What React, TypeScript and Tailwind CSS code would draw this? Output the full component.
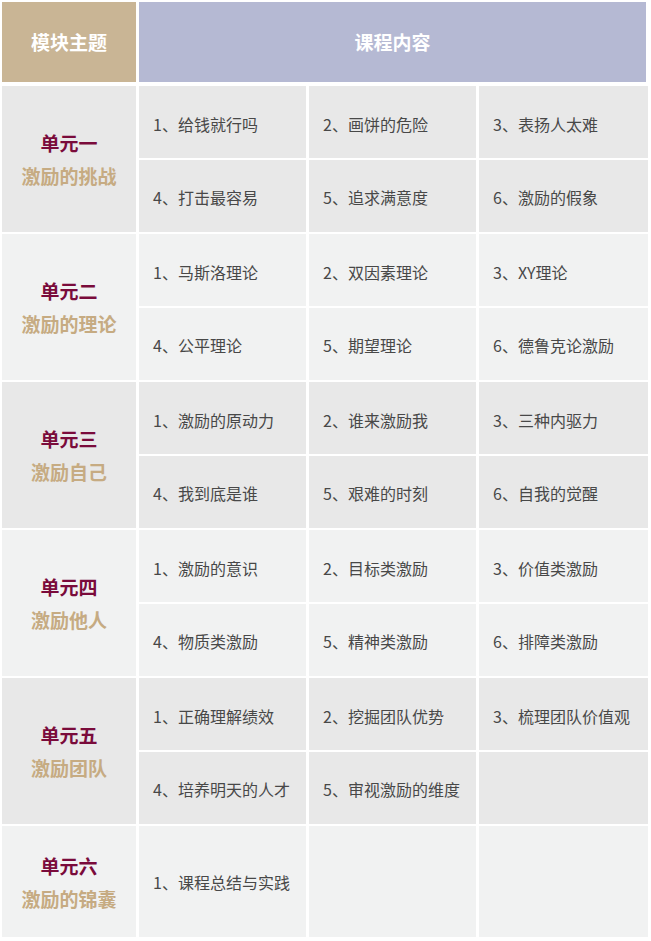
const units = [
  {
    title: "单元一",
    subtitle: "激励的挑战",
    items: ["1、给钱就行吗", "2、画饼的危险", "3、表扬人太难", "4、打击最容易", "5、追求满意度", "6、激励的假象"],
  },
  {
    title: "单元二",
    subtitle: "激励的理论",
    items: ["1、马斯洛理论", "2、双因素理论", "3、XY理论", "4、公平理论", "5、期望理论", "6、德鲁克论激励"],
  },
  {
    title: "单元三",
    subtitle: "激励自己",
    items: ["1、激励的原动力", "2、谁来激励我", "3、三种内驱力", "4、我到底是谁", "5、艰难的时刻", "6、自我的觉醒"],
  },
  {
    title: "单元四",
    subtitle: "激励他人",
    items: ["1、激励的意识", "2、目标类激励", "3、价值类激励", "4、物质类激励", "5、精神类激励", "6、排障类激励"],
  },
  {
    title: "单元五",
    subtitle: "激励团队",
    items: ["1、正确理解绩效", "2、挖掘团队优势", "3、梳理团队价值观", "4、培养明天的人才", "5、审视激励的维度", ""],
  },
];

const font = { fontFamily: '"Noto Sans CJK SC", "Microsoft YaHei", sans-serif' };

function UnitLabel({ title, subtitle }: { title: string; subtitle: string }) {
  return (
    <div className="flex flex-col items-center justify-center gap-[6px]">
      <span className="text-[19px] font-bold leading-[27px] text-[#7a0b3b]">{title}</span>
      <span className="text-[19px] font-bold leading-[27px] text-[#c6ab82]">{subtitle}</span>
    </div>
  );
}

export default function App() {
  return (
    <div className="w-[651px] h-[941px] bg-white pt-[2px] pl-[2px]" style={font}>
      {/* 表头 */}
      <div className="grid grid-cols-[134px_507px] gap-x-[3px] h-[80px]">
        <div className="flex items-center justify-center bg-[#c9b595] text-[19px] font-bold text-white">模块主题</div>
        <div className="flex items-center justify-center bg-[#b5b9d3] text-[19px] font-bold text-white">课程内容</div>
      </div>

      <div className="mt-[4px] flex flex-col gap-[2px]">
        {units.map((u, i) => {
          const bg = i % 2 === 0 ? "bg-[#e8e8e8]" : "bg-[#f1f2f2]";
          return (
            <div
              key={u.title}
              className="grid grid-cols-[134px_167px_167px_169px] grid-rows-[72px_72px] gap-x-[3px] gap-y-[2px]"
            >
              <div className={`row-span-2 flex items-center justify-center ${bg}`}>
                <UnitLabel title={u.title} subtitle={u.subtitle} />
              </div>
              {u.items.map((item, j) => (
                <div
                  key={j}
                  className={`flex items-center pl-[14px] text-[16px] text-[#484848] ${bg} ${j >= 3 ? "pt-[2px]" : "pt-[4px]"}`}
                >
                  {item}
                </div>
              ))}
            </div>
          );
        })}

        {/* 单元六 */}
        <div className="grid grid-cols-[134px_167px_167px_169px] h-[111px] gap-x-[3px]">
          <div className="flex items-center justify-center bg-[#f1f2f2]">
            <UnitLabel title="单元六" subtitle="激励的锦囊" />
          </div>
          <div className="flex items-center pl-[14px] text-[16px] text-[#484848] bg-[#f1f2f2]">1、课程总结与实践</div>
          <div className="bg-[#f1f2f2]" />
          <div className="bg-[#f1f2f2]" />
        </div>
      </div>
    </div>
  );
}
